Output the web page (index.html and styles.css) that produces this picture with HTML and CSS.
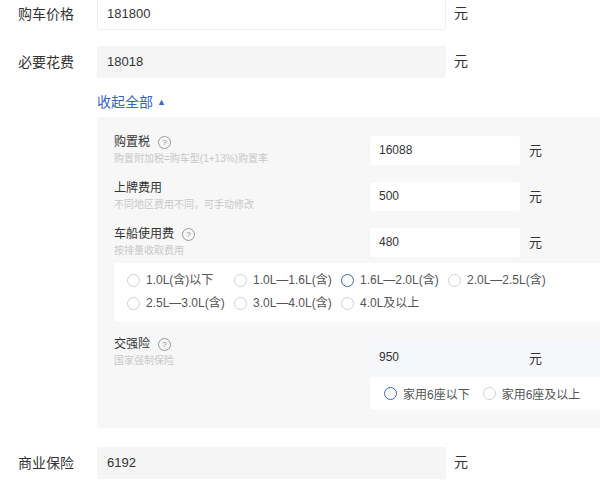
FILE: index.html
```html
<!DOCTYPE html>
<html lang="zh-CN">
<head>
    <meta charset="UTF-8">
    <meta name="viewport" content="width=device-width, initial-scale=1.0">
    <link rel="stylesheet" href="styles.css">
    <title>购车费用计算</title>
</head>
<body>
    <div class="calc">
        <div class="row row-first">
            <span class="label">购车价格</span>
            <div class="field field-white">181800</div>
            <span class="unit">元</span>
        </div>
        <div class="row">
            <span class="label">必要花费</span>
            <div class="field">18018</div>
            <span class="unit">元</span>
        </div>
        <div class="toggle">收起全部<span class="arrow">▲</span></div>

        <div class="detail">
            <div class="fee-row">
                <div class="fee-label">
                    <div class="fee-title">购置税<span class="help">?</span></div>
                    <div class="fee-sub">购置附加税=购车型(1+13%)购置率</div>
                </div>
                <div class="fee-input">16088</div>
                <span class="fee-unit">元</span>
            </div>
            <div class="fee-row">
                <div class="fee-label">
                    <div class="fee-title">上牌费用</div>
                    <div class="fee-sub">不同地区费用不同，可手动修改</div>
                </div>
                <div class="fee-input">500</div>
                <span class="fee-unit">元</span>
            </div>
            <div class="fee-row">
                <div class="fee-label">
                    <div class="fee-title">车船使用费<span class="help">?</span></div>
                    <div class="fee-sub">按排量收取费用</div>
                </div>
                <div class="fee-input">480</div>
                <span class="fee-unit">元</span>
            </div>
            <div class="radio-box">
                <label class="radio"><span class="dot"></span>1.0L(含)以下</label>
                <label class="radio"><span class="dot"></span>1.0L—1.6L(含)</label>
                <label class="radio"><span class="dot checked"></span>1.6L—2.0L(含)</label>
                <label class="radio"><span class="dot"></span>2.0L—2.5L(含)</label>
                <label class="radio"><span class="dot"></span>2.5L—3.0L(含)</label>
                <label class="radio"><span class="dot"></span>3.0L—4.0L(含)</label>
                <label class="radio"><span class="dot"></span>4.0L及以上</label>
            </div>

            <div class="fee-row insurance">
                <div class="fee-label">
                    <div class="fee-title">交强险<span class="help">?</span></div>
                    <div class="fee-sub">国家强制保险</div>
                </div>
                <div class="insurance-right">
                    <div class="value-band">
                        <div class="band-value">950</div>
                        <span class="band-unit">元</span>
                    </div>
                    <div class="seat-box">
                        <label class="radio seat"><span class="dot checked"></span>家用6座以下</label>
                        <label class="radio seat"><span class="dot"></span>家用6座及以上</label>
                    </div>
                </div>
            </div>
        </div>

        <div class="row row-last">
            <span class="label">商业保险</span>
            <div class="field">6192</div>
            <span class="unit">元</span>
        </div>
    </div>
</body>
</html>
```

FILE: styles.css
```css
html, body {
    margin: 0;
    background-color: #fff;
    overflow: hidden;
}
body {
    font-family: "Liberation Sans", "Noto Sans CJK SC", sans-serif;
    color: #333;
}
.calc {
    width: 600px;
}
.row {
    display: flex;
    align-items: center;
    height: 32px;
    margin-top: 16px;
}
.row-first {
    margin-top: -2px;
}
.row-last {
    margin-top: 19px;
}
.label {
    width: 97px;
    padding-left: 18px;
    box-sizing: border-box;
    font-size: 14px;
    margin-bottom: 2px;
}
.field {
    width: 349px;
    height: 32px;
    box-sizing: border-box;
    padding-left: 10px;
    font-size: 13px;
    line-height: 32px;
    background-color: #f5f5f5;
    border-radius: 2px;
}
.field-white {
    background-color: #fff;
    border: 1px solid #eee;
    padding-left: 9px;
    line-height: 30px;
}
.unit {
    margin-left: 8px;
    margin-bottom: 4px;
    font-size: 14px;
}
.toggle {
    margin: 14px 0 0 97px;
    font-size: 14px;
    line-height: 20px;
    color: #3765c6;
}
.arrow {
    font-size: 9px;
    margin-left: 4px;
    vertical-align: 2px;
}
.detail {
    margin: 5px 0 0 97px;
    padding: 17px 0 18px 17px;
    background-color: #f7f7f7;
}
.fee-row {
    display: flex;
    align-items: flex-start;
}
.fee-row + .fee-row {
    margin-top: 13px;
}
.fee-label {
    width: 256px;
    flex-shrink: 0;
}
.fee-title {
    display: flex;
    align-items: center;
    font-size: 12px;
    line-height: 17px;
}
.fee-sub {
    font-size: 10px;
    line-height: 16px;
    color: #c8c8c8;
}
.help {
    width: 11px;
    height: 11px;
    margin-left: 8px;
    border: 1px solid #999;
    border-radius: 50%;
    font-size: 8px;
    line-height: 11px;
    text-align: center;
    color: #888;
}
.fee-input {
    width: 150px;
    height: 29px;
    margin-top: 2px;
    padding-left: 9px;
    box-sizing: border-box;
    background-color: #fff;
    border-radius: 3px;
    font-size: 12px;
    line-height: 29px;
}
.fee-unit {
    margin-top: 2px;
    margin-left: 9px;
    font-size: 13px;
    line-height: 29px;
}
.radio-box {
    display: grid;
    grid-template-columns: repeat(4, 107px);
    margin-top: 4px;
    padding: 6px 0 7px 13px;
    background-color: #fff;
    border-radius: 3px 0 0 3px;
    font-size: 12px;
    line-height: 23px;
    color: #555;
}
.radio {
    display: flex;
    align-items: center;
    white-space: nowrap;
}
.dot {
    width: 13px;
    height: 13px;
    margin-right: 6px;
    box-sizing: border-box;
    border: 1px solid #d0d0d0;
    border-radius: 50%;
    background-color: #fff;
}
.dot.checked {
    border: 1.5px solid #3a64b5;
}
.fee-row.insurance {
    margin-top: 14px;
}
.insurance-right {
    flex: 1;
    margin-top: 4px;
}
.value-band {
    display: flex;
    align-items: center;
    height: 37px;
    padding-bottom: 3px;
    box-sizing: border-box;
    background-color: #f6f7fa;
}
.band-value {
    width: 150px;
    padding-left: 9px;
    box-sizing: border-box;
    font-size: 12px;
}
.band-unit {
    margin-left: 9px;
    font-size: 13px;
}
.seat-box {
    display: flex;
    align-items: center;
    height: 33px;
    padding-left: 14px;
    background-color: #fff;
    border-radius: 3px 0 0 3px;
    font-size: 12px;
    color: #555;
}
.seat {
    margin-right: 13px;
}
```
